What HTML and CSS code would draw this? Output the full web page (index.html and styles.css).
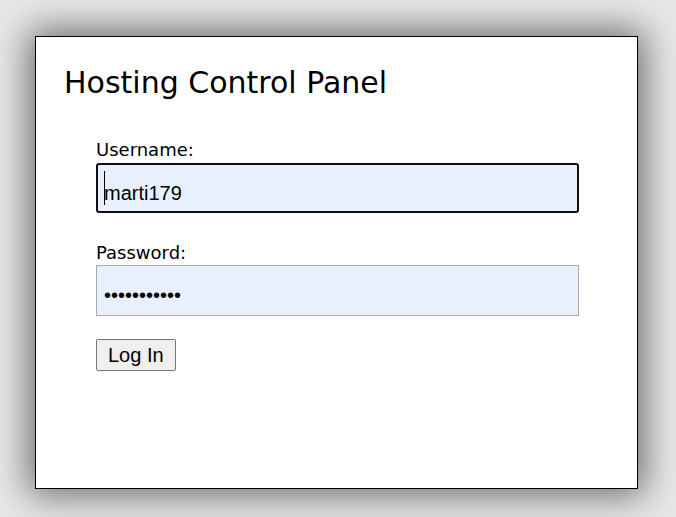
FILE: index.html
```html
<!DOCTYPE html>
<html>
<head>
<meta charset="utf-8">
<link rel="stylesheet" href="styles.css">
<title>Hosting Control Panel</title>
</head>
<body>
<div class="panel">
  <h1 class="title">Hosting Control Panel</h1>
  <form class="login">
    <label class="label" for="user">Username:</label>
    <div class="field">
      <input id="user" class="input input-focused" type="text" value="marti179">
      <span class="caret"></span>
    </div>
    <label class="label label-gap" for="pass">Password:</label>
    <div class="field">
      <input id="pass" class="input" type="password" value="abcdefghijk">
    </div>
    <button class="btn" type="button">Log In</button>
  </form>
</div>
</body>
</html>
```
FILE: styles.css
```css
html, body {
  margin: 0;
  padding: 0;
}
body {
  background: #e8e8e8;
  width: 676px;
  height: 517px;
  overflow: hidden;
  padding-top: 36px;
  padding-left: 35px;
  box-sizing: border-box;
}
.panel {
  width: 603px;
  height: 453px;
  box-sizing: border-box;
  background: #fff;
  border: 1px solid #000;
  box-shadow: 0 0 35px 6px rgba(0, 0, 0, 0.55);
  padding: 28px 0 0 28px;
}
.title {
  margin: 0;
  font-family: "DejaVu Sans", Verdana, sans-serif;
  font-weight: normal;
  font-size: 30px;
  line-height: normal;
  color: #000;
}
.login {
  margin: 39px 0 0 32px;
  width: 483px;
  display: flex;
  flex-direction: column;
}
.label {
  font-family: "DejaVu Sans", Verdana, sans-serif;
  font-size: 18px;
  line-height: normal;
  color: #000;
  margin-bottom: 3px;
}
.label-gap {
  margin-top: 29px;
  margin-bottom: 2px;
}
.field {
  position: relative;
}
.input {
  display: block;
  width: 483px;
  height: 51px;
  box-sizing: border-box;
  margin: 0;
  background: #e8f0fe;
  border: 1px solid #a9a9a9;
  border-radius: 0;
  padding: 9px 7px 0;
  font-family: "Liberation Sans", Arial, sans-serif;
  font-size: 20px;
  color: #000;
  outline: none;
}
.input-focused {
  height: 50px;
  border: 2px solid #101010;
  border-radius: 3px;
  padding: 10px 6px 0;
}
.caret {
  position: absolute;
  left: 8px;
  top: 8px;
  width: 1px;
  height: 34px;
  background: #000;
}
.btn {
  align-self: flex-start;
  margin-top: 23px;
  height: 32px;
  padding: 0 11px;
  font-family: "Liberation Sans", Arial, sans-serif;
  font-size: 20px;
  color: #000;
  background: #efefef;
  border: 1px solid #767676;
  border-radius: 2px;
}
```
